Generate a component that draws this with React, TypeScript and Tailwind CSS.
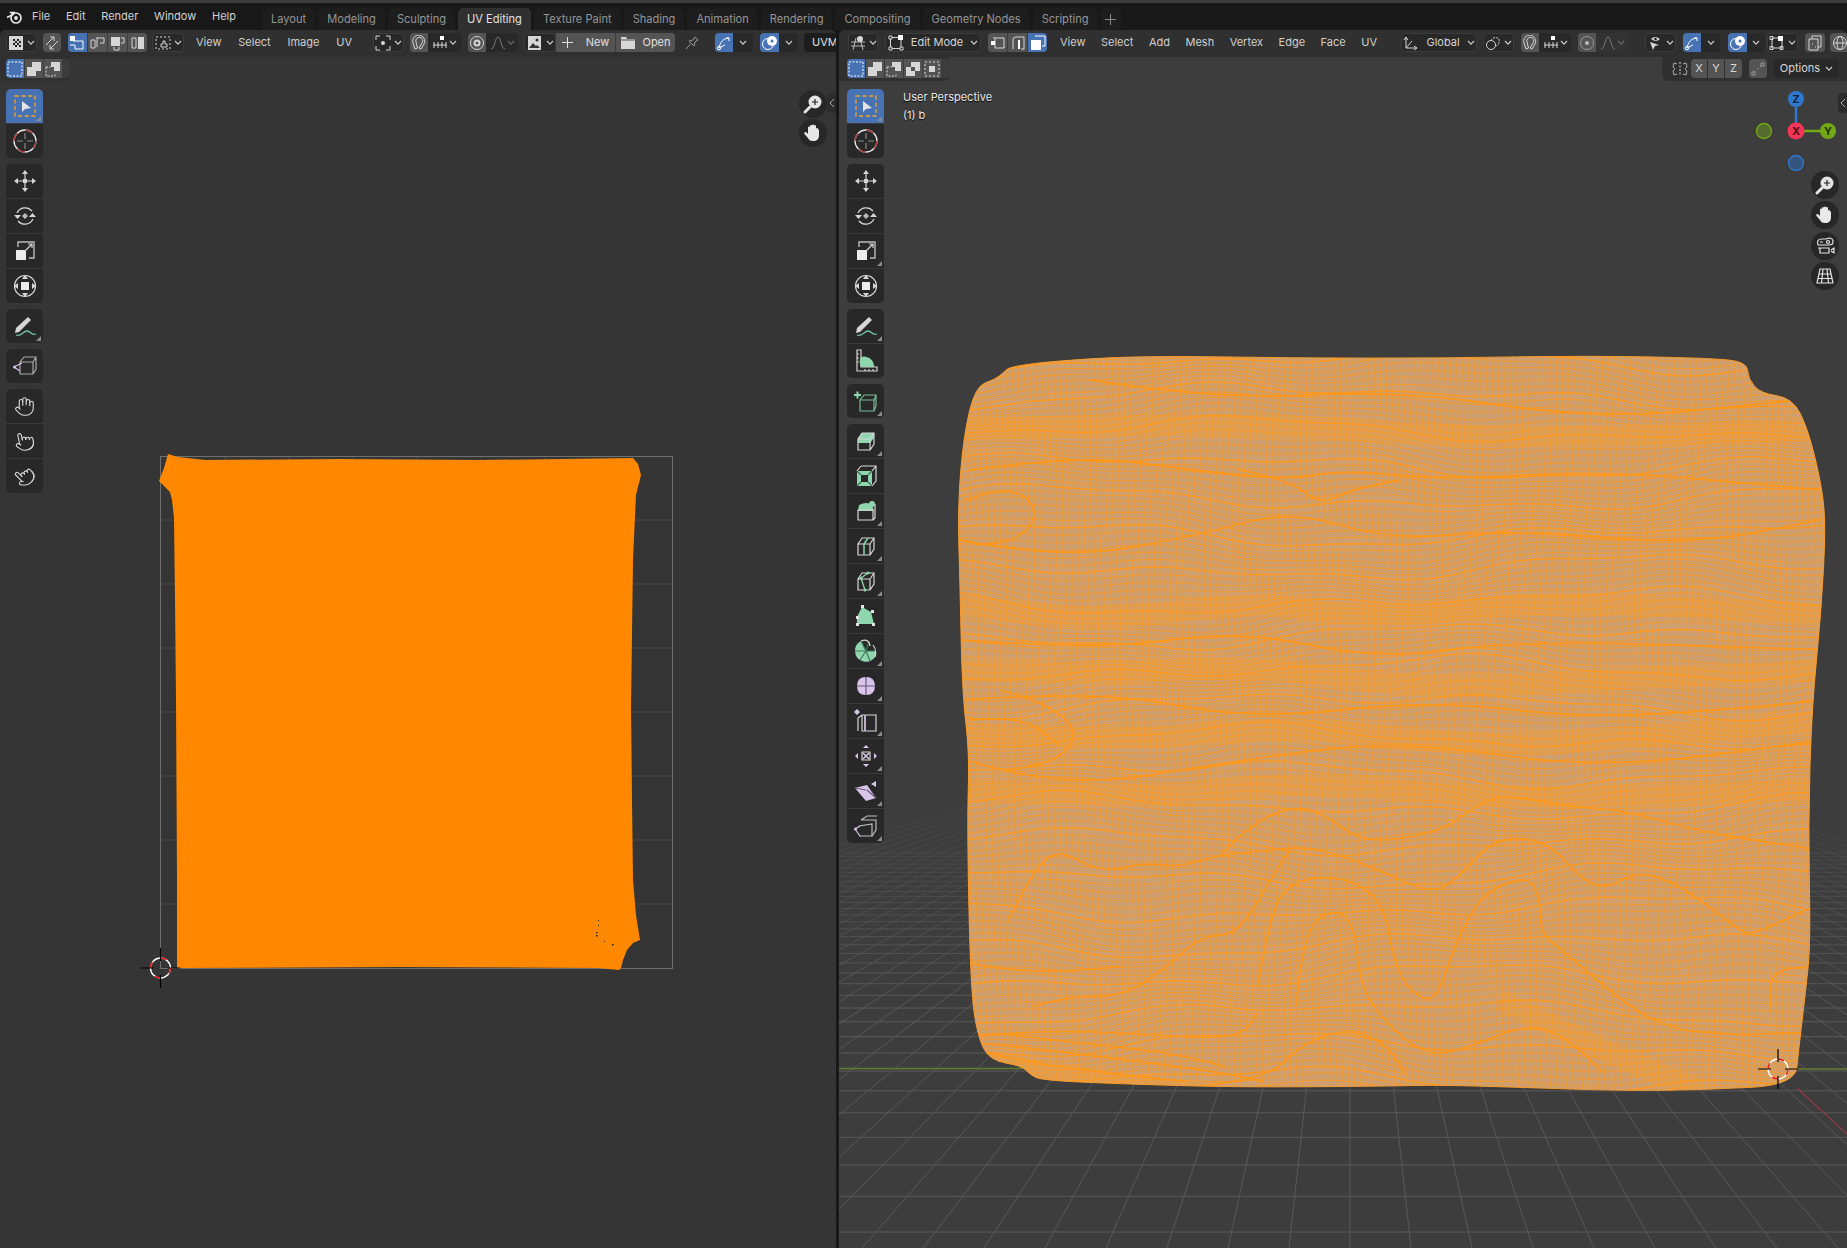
import React from "react";
import { Hand, Pointer } from "lucide-react";

const S = 1.178;
type P = [number, number];
const smooth = (pts: P[], close = true) => {
  const n = pts.length;
  const mid = (a: P, b: P): P => [(a[0] + b[0]) / 2, (a[1] + b[1]) / 2];
  if (close) {
    const m0 = mid(pts[n - 1], pts[0]);
    let d = `M${m0[0].toFixed(1)} ${m0[1].toFixed(1)}`;
    for (let i = 0; i < n; i++) {
      const m = mid(pts[i], pts[(i + 1) % n]);
      d += `Q${pts[i][0].toFixed(1)} ${pts[i][1].toFixed(1)} ${m[0].toFixed(1)} ${m[1].toFixed(1)}`;
    }
    return d + "Z";
  }
  let d = `M${pts[0][0].toFixed(1)} ${pts[0][1].toFixed(1)}`;
  for (let i = 1; i < n - 1; i++) {
    const m = mid(pts[i], pts[i + 1]);
    d += `Q${pts[i][0].toFixed(1)} ${pts[i][1].toFixed(1)} ${m[0].toFixed(1)} ${m[1].toFixed(1)}`;
  }
  const l = pts[n - 1];
  return d + `L${l[0].toFixed(1)} ${l[1].toFixed(1)}`;
};

const meshOutline: P[] = ([
  [828, 328], [845, 322], [852, 316], [858, 311], [900, 306], [975, 302], [1100, 304], [1225, 304], [1350, 302], [1450, 304], [1483, 307], [1484, 322], [1495, 334], [1522, 338],
  [1535, 365], [1546, 410], [1550, 445], [1546, 520], [1538, 600], [1535, 700], [1537, 800], [1533, 840], [1527, 890], [1524, 921], [1450, 925], [1380, 926], [1290, 923], [1220, 921], [1180, 922], [1050, 923], [950, 920], [884, 917], [874, 912], [868, 905], [840, 900], [830, 880], [824, 840],
  [821, 700], [823, 640], [817, 590], [815, 500], [813, 430], [818, 370],
] as P[]).map(([x, y]) => [x * S, y * S] as P);
const meshD = smooth(meshOutline);

const wave = (x: number, i: number) =>
  9 * Math.sin(x / 130 + i * 0.11) + 5 * Math.sin(x / 61 - i * 0.23) + 3 * Math.sin(x / 29 + i * 0.07);

let hThin = "";
let hThick = "";
for (let i = 0; i < 150; i++) {
  const y0 = 345 + i * 5.7;
  let d = "";
  for (let x = 940; x <= 1840; x += 18) d += `${x === 940 ? "M" : "L"}${x} ${(y0 + wave(x, i)).toFixed(1)}`;
  if (i % 6 === 3) hThick += d;
  else hThin += d;
}
let vThin = "";
for (let x = 950; x < 1840; x += 5.7) {
  let d = "";
  for (let y = 340; y <= 1110; y += 30) {
    const dx = 3 * Math.sin(y / 90 + x / 70) + (x - 1350) * (y - 340) * -0.00003;
    d += `${y === 340 ? "M" : "L"}${(x + dx).toFixed(1)} ${y}`;
  }
  vThin += d;
}
const zoomed = (a: P[]) => smooth(a.map(([x, y]) => [840 + x / 1.557, 780 + y / 3] as P), false);
const folds = [
  [[590, 230], [640, 130], [710, 75], [760, 110], [800, 170], [850, 185], [940, 150], [980, 90], [1030, 40], [1130, 80], [1220, 90], [1330, 150], [1420, 180], [1510, 205]],
  [[380, 250], [410, 275], [470, 250], [530, 260], [590, 225], [650, 215], [720, 200], [780, 225], [850, 280], [920, 340], [960, 300], [1010, 190], [1060, 170], [1110, 200], [1150, 290], [1190, 330], [1240, 275], [1290, 300], [1340, 360], [1400, 450], [1420, 465], [1510, 385]],
  [[650, 620], [670, 400], [700, 310], [760, 285], [820, 320], [850, 400], [860, 520], [880, 620], [920, 670], [940, 600], [960, 480], [1000, 340], [1070, 285], [1090, 350], [1090, 460], [1130, 520], [1190, 620], [1260, 720], [1340, 765], [1500, 760]],
  [[710, 680], [720, 470], [760, 385], [800, 420], [810, 620], [850, 730], [910, 825], [970, 810], [1070, 730], [1130, 770], [1190, 880]],
  [[300, 680], [350, 650], [440, 650], [510, 560], [560, 470], [610, 465], [640, 400], [670, 300], [700, 210]],
  [[210, 770], [310, 750], [450, 760], [620, 780], [650, 700]],
  [[540, 920], [660, 905], [720, 790], [790, 745], [850, 790], [880, 880]],
  [[260, 430], [300, 270], [340, 210], [380, 250]],
  [[1450, 690], [1445, 620], [1460, 570], [1505, 560]],
  [[220, 790], [320, 810], [450, 840], [600, 880], [660, 905]],
  [[220, 815], [300, 850], [420, 880], [540, 905]],
  [[240, 760], [380, 790], [520, 820], [600, 860]],
  [[200, 550], [260, 570], [340, 575], [440, 560]],
] as P[][];
const topFolds = ([
  [[970, 470], [1080, 455], [1190, 470], [1290, 480], [1340, 470], [1450, 480], [1600, 470], [1820, 490]],
  [[960, 540], [1060, 560], [1200, 535], [1290, 510], [1390, 540], [1510, 530], [1690, 545], [1820, 520]],
  [[960, 640], [1100, 650], [1240, 630], [1380, 660], [1520, 640], [1830, 650]],
  [[960, 700], [1100, 690], [1250, 720], [1430, 700], [1600, 720], [1830, 700]],
  [[966, 760], [1060, 790], [1240, 760], [1400, 740], [1600, 770], [1825, 740]],
  [[1090, 380], [1220, 400], [1400, 390], [1600, 420], [1800, 400]],
  [[1240, 470], [1290, 480], [1320, 505], [1350, 490], [1400, 480]],
  [[965, 500], [1010, 485], [1040, 510], [1020, 540], [975, 545]],
  [[1000, 690], [1040, 700], [1080, 730], [1060, 760], [1010, 770]],
  [[970, 720], [1020, 715], [1060, 745]],
] as P[][]).map((a) => smooth(a, false));
const bands = ([
  [[960, 605], [1100, 625], [1240, 600], [1380, 620], [1540, 600], [1830, 615]],
  [[960, 670], [1100, 675], [1250, 665], [1430, 690], [1600, 680], [1830, 670]],
  [[960, 735], [1150, 740], [1300, 725], [1500, 750], [1830, 720]],
  [[960, 790], [1150, 800], [1300, 780], [1500, 800], [1830, 790]],
  [[960, 430], [1200, 420], [1500, 440], [1830, 430]],
  [[1500, 1000], [1600, 1050], [1700, 1090]],
  [[970, 1060], [1100, 1080], [1200, 1095]],
] as P[][]).map((a) => smooth(a, false));

const hLines: number[] = [];
for (let n = -1; n < 34; n++) hLines.push(690 + 1 / (0.001845 + 0.00013 * n));
const vLines: number[] = [];
for (let k = -30; k <= 30; k++) vLines.push(k);

const uvShape =
  "168,454 178,457 205,460 340,459 480,460 633,458 638,464 641,475 636,495 633,560 631,707 632,800 633,880 636,915 640,940 633,943 627,950 623,960 621,968 619,970 598,968 400,967 177,968 177,880 176,700 175,600 174,518 172,500 170,492 165,487 159,481 164,468";

const Cursor = ({ x, y }: { x: number; y: number }) => (
  <g>
    <circle cx={x} cy={y} r="10" fill="none" stroke="#fff" strokeWidth="1.4" />
    <circle cx={x} cy={y} r="10" fill="none" stroke="#e81010" strokeWidth="1.4" strokeDasharray="6 9.7" />
    <path d={`M${x - 20} ${y}h13M${x + 7} ${y}h13M${x} ${y - 20}v13M${x} ${y + 7}v13`} stroke="#000" strokeWidth="1.2" />
  </g>
);

const W = "#d6d6d6";
const G = "#8fd6ae";
const V = "#d9c4ea";

const Chev = ({ c = "#c8c8c8" }: { c?: string }) => (
  <svg width="8" height="6" viewBox="0 0 8 6" className="shrink-0">
    <path d="M1 1l3 3.2L7 1" fill="none" stroke={c} strokeWidth="1.2" />
  </svg>
);

const I16 = ({ children, w = 16 }: { children: React.ReactNode; w?: number }) => (
  <svg width={w} height="16" viewBox={`0 0 ${w} 16`} fill="none" stroke={W} strokeWidth="1" className="shrink-0">
    {children}
  </svg>
);

const HI: Record<string, React.ReactNode> = {
  uv: (
    <I16>
      <path d="M1 1h14v14H1z" fill={W} stroke="none" />
      <path d="M5 4h2v2H5zM9 4h2v2H9zM7 6h2v2H7zM11 6h2v2h-2zM9 8h2v2H9zM7 10h2v2H7zM11 10h2v2h-2zM5 8h2v2H5z" fill="#222" stroke="none" />
    </I16>
  ),
  sync: (
    <I16>
      <path d="M2 10l8-8M10 2H6M10 2v4M14 6l-8 8M6 14h4M6 14v-4" />
    </I16>
  ),
  v1: (
    <I16>
      <path d="M3 6h10v8H5v-4H0" stroke="#fff" />
      <path d="M0 1h5v5H0z" fill="#fff" stroke="none" />
    </I16>
  ),
  v2: (
    <I16>
      <path d="M1 5h4v8H1zM7 2v10M7 3h3M10 3h4v5h-4" />
    </I16>
  ),
  v3: (
    <I16>
      <path d="M1 2h9v9H1z" fill={W} stroke="none" />
      <path d="M11 3h3v5h-3M4 12v3h5v-3" />
    </I16>
  ),
  v4: (
    <I16>
      <path d="M2 3h4v10H2z" />
      <path d="M8 2h6v12H8z" fill={W} stroke="none" />
    </I16>
  ),
  sticky: (
    <I16>
      <path d="M1 2h14v12H1z" strokeDasharray="2 2" />
      <path d="M6 9h2V6h2v3h2v3H6z" />
    </I16>
  ),
  pivot: (
    <I16>
      <path d="M1 5V1h4M11 1h4v4M15 11v4h-4M5 15H1v-4" />
      <circle cx="8" cy="8" r="2" fill={W} stroke="none" />
    </I16>
  ),
  mag: (
    <I16>
      <path d="M4 14L2 8a6 6 0 1 1 11 1l-3 5-2-1 3-5a3.500 3.500 0 1 0-6-1l1.500 6z" />
    </I16>
  ),
  inc: (
    <I16>
      <path d="M1 10h14M2 7v6M6 7v6M10 7v6M14 7v6" />
      <path d="M8 1h4v4H8z" fill="#fff" stroke="none" />
    </I16>
  ),
  prop: (
    <I16>
      <circle cx="8" cy="8" r="6.5" />
      <circle cx="8" cy="8" r="3.5" fill={W} stroke="none" />
      <circle cx="8" cy="8" r="1.5" fill="#555" stroke="none" />
    </I16>
  ),
  propd: (
    <svg width="16" height="16" viewBox="0 0 16 16" fill="none" stroke="#9a9a9a">
      <circle cx="8" cy="8" r="6.5" />
      <circle cx="8" cy="8" r="2" fill="#bbb" stroke="none" />
    </svg>
  ),
  curve: (
    <svg width="16" height="16" viewBox="0 0 16 16" fill="none" stroke="#777">
      <path d="M1 14c4 0 4-12 7-12s3 12 7 12" />
    </svg>
  ),
  image: (
    <I16>
      <path d="M1 1h13v14H1z" fill={W} stroke="none" />
      <path d="M2 13l4-5 3 3 1-1 3 3z" fill="#333" stroke="none" />
      <circle cx="10" cy="5" r="1.5" fill="#333" stroke="none" />
    </I16>
  ),
  folder: (
    <I16>
      <path d="M1 2h5l1 2h8v10H1z" fill={W} stroke="none" />
      <path d="M1 5h14" stroke="#555" />
    </I16>
  ),
  pin: (
    <I16>
      <path d="M2 14l4.5-5M5 6l5 5 1-4 3-2-3-3-2 3z" stroke="#9a9a9a" />
    </I16>
  ),
  gizmo: (
    <I16>
      <path d="M3 13C4 7 8 3 13 3M13 3h-3M13 3v3M3 13l6-3" stroke="#fff" />
      <circle cx="3" cy="13" r="1.7" stroke="#fff" />
    </I16>
  ),
  overlay: (
    <I16>
      <circle cx="6" cy="9" r="5.5" stroke="#fff" />
      <circle cx="10" cy="6" r="5" fill="#fff" stroke="none" />
      <circle cx="10" cy="6" r="1.5" fill="#4772b3" stroke="none" />
    </I16>
  ),
  vp: (
    <I16>
      <path d="M1 7h14M1 11h14M6 3L3 15M10 3l3 12" stroke="#bbb" />
      <circle cx="10" cy="4" r="3" fill={W} stroke="none" />
    </I16>
  ),
  edit: (
    <I16>
      <path d="M3 2.5h9M2.5 3v10M13 3v10M3 13.5h9" />
      <path d="M10 0h5v5h-5z" fill="#fff" stroke="none" />
      <path d="M1 1h3v3H1zM1 12h3v3H1zM12 12h3v3h-3z" fill="#282828" />
    </I16>
  ),
  m1: (
    <I16>
      <path d="M5 3h9v10H5zM3 3q2-1 2 0" />
      <path d="M1 6h4v4H1z" fill="#fff" stroke="none" />
    </I16>
  ),
  m2: (
    <I16>
      <path d="M3 14V5q0-3 3-3h8v12h-3" />
      <path d="M9 5v9" stroke="#fff" strokeWidth="2" />
    </I16>
  ),
  m3: (
    <I16>
      <path d="M1 5h10v10H1z" fill="#fff" stroke="none" />
      <path d="M5 1h10v10h-3" stroke="#fff" />
    </I16>
  ),
  global: (
    <I16>
      <path d="M3 2v11h11M3 13l6-7M3 2l-2 3M3 2l2 3M14 13l-3-2M14 13l-3 2" />
    </I16>
  ),
  pivot2: (
    <I16>
      <circle cx="6" cy="10" r="4.5" />
      <path d="M6 5.5A5 5 0 0 1 14 4c1 3-1 7-3.5 7" strokeDasharray="2 1" />
    </I16>
  ),
  visi: (
    <I16>
      <path d="M3 7l9 3-4 1-2 4z" fill={W} stroke="none" />
      <path d="M4 4q4-4 9 0q-4 4-9 0z" fill={W} stroke="none" />
      <circle cx="8.5" cy="4" r="1.3" fill="#222" stroke="none" />
    </I16>
  ),
  editsq: (
    <I16>
      <path d="M3 3h8M3 13h10M3 3v10M13 6v7" />
      <path d="M9 1h5v5H9z" fill="#fff" stroke="none" />
      <path d="M1 1.5h3v3H1zM1 11.5h3v3H1zM11 11.5h3v3h-3z" />
    </I16>
  ),
  xray: (
    <I16>
      <path d="M5 1h9v11H5z" />
      <path d="M2 4h9v11H2z" fill="#545454" />
      <path d="M5 9h1M8 12h1" />
    </I16>
  ),
  shade: (
    <I16>
      <circle cx="8" cy="8" r="6.5" />
      <ellipse cx="8" cy="8" rx="3" ry="6.5" />
      <path d="M1.5 8h13" />
    </I16>
  ),
  mirror: (
    <I16>
      <path d="M8 1v14" strokeDasharray="2 1.5" />
      <path d="M5 3L2 2 1 6l2 2-2 2 1 4 3-1M11 3l3-1 1 4-2 2 2 2-1 4-3-1" stroke="#aaa" />
    </I16>
  ),
  automerge: (
    <I16>
      <path d="M4 11L11 5" strokeDasharray="2 2" stroke="#999" />
      <path d="M2 11h3v3H2zM11 2h3v3h-3z" stroke="#999" />
    </I16>
  ),
  sel1: (
    <I16>
      <path d="M1 1h14v14H1z" stroke="#fff" strokeDasharray="2 1.5" />
    </I16>
  ),
  sel2: (
    <I16>
      <path d="M1 6h5V1h9v9h-5v5H1z" fill={W} stroke="none" />
    </I16>
  ),
  sel3: (
    <I16>
      <path d="M6 1h9v9H9V6H6z" fill={W} stroke="none" />
      <path d="M1 6h5M1 6v9h9v-3M6 6" strokeDasharray="2 1.5" />
    </I16>
  ),
  sel4: (
    <I16>
      <path d="M1 6h5V1h9v9h-5v5H1z" fill={W} stroke="none" />
      <path d="M6 6h4v4H6z" fill="#545454" stroke="none" />
    </I16>
  ),
  sel5: (
    <I16>
      <path d="M1 1h14v14H1z" strokeDasharray="2 2" />
      <path d="M5 5h6v6H5z" fill={W} stroke="none" />
    </I16>
  ),
};

const Drop = ({ icon, w, label }: { icon?: string; w: string; label?: string }) => (
  <div className={`${w} h-[19px] shrink-0 flex items-center justify-center gap-[3px] rounded-[4px] bg-[#282828] border border-[#3c3c3c]`}>
    {icon ? HI[icon] : null}
    {label ? <span className="text-[11px] mx-[4px] text-[#d4d4d4]">{label}</span> : null}
    <Chev />
  </div>
);

const Seg = ({ items, bw, active = -1 }: { items: React.ReactNode[]; bw: string; active?: number }) => (
  <div className="flex h-[19px] shrink-0 rounded-[4px] overflow-hidden gap-px bg-[#3c3c3c]">
    {items.map((it, i) => (
      <div key={i} className={`${bw} shrink-0 flex items-center justify-center ${i === active ? "bg-[#4772b3]" : "bg-[#545454]"}`}>
        {it}
      </div>
    ))}
  </div>
);

const Menu = ({ items, cls }: { items: string[]; cls: string }) => (
  <div className={`flex justify-between shrink-0 text-[11px] text-[#cfcfcf] ${cls}`}>
    {items.map((m) => (
      <span key={m}>{m}</span>
    ))}
  </div>
);

const Corner = () => (
  <svg width="5" height="5" viewBox="0 0 5 5" className="absolute right-[2px] bottom-[2px]">
    <path d="M5 0v5H0z" fill="#8c8c8c" />
  </svg>
);

const Cube = ({ c = W }: { c?: string }) => (
  <path d="M4 10h12v11H4zM4 10l4-6h12v11l-4 6M16 10l4-6" fill="none" stroke={c} strokeWidth="1.2" />
);

type TI = { d: React.ReactNode; c?: boolean; a?: boolean };
const T24 = ({ children }: { children: React.ReactNode }) => (
  <svg width="24" height="24" viewBox="0 0 24 24" fill="none" stroke={W} strokeWidth="1.2">
    {children}
  </svg>
);
const ic = {
  select: (
    <T24>
      <path d="M2 2h20v20H2z" stroke="#f5a623" strokeWidth="1.3" strokeDasharray="4 2.6" />
      <path d="M9 7v11l3-3 6-1z" fill="#e4e4e4" stroke="none" />
    </T24>
  ),
  cursor: (
    <T24>
      <circle cx="12" cy="12" r="11" stroke="#e8e8e8" strokeWidth="1.3" />
      <circle cx="12" cy="12" r="11" stroke="#a33535" strokeWidth="1.4" strokeDasharray="8 9.3" />
      <path d="M12 4v6M12 14v6M4 12h6M14 12h6" stroke="#8a8a8a" />
    </T24>
  ),
  move: (
    <T24>
      <path d="M12 1l3 4H9zM12 23l3-4H9zM1 12l4-3v6zM23 12l-4-3v6z" fill={W} stroke="none" />
      <path d="M12 5v5M12 14v5M5 12h5M14 12h5" />
      <path d="M10 10h4v4h-4z" fill={W} stroke="none" />
    </T24>
  ),
  rotate: (
    <T24>
      <path d="M4 9a9 9 0 0 1 15-2M20 15a9 9 0 0 1-15 2" />
      <path d="M1 11h7l-3.500 4zM16 13h7l-3.500-4z" fill={W} stroke="none" />
      <path d="M12 9l3 3-3 3-3-3z" fill="#bbb" stroke="none" />
    </T24>
  ),
  scale: (
    <T24>
      <path d="M5 8V3h16v16h-5" stroke="#bbb" strokeWidth="1.4" />
      <path d="M3 11h10v10H3z" fill="#ececec" stroke="none" />
      <path d="M12 12l7-7M15 5h4v4" />
    </T24>
  ),
  transform: (
    <T24>
      <circle cx="12" cy="12" r="10.500" />
      <path d="M8 8h8v8H8z" fill="#ececec" stroke="none" />
      <path d="M12 1l3 4H9zM12 23l3-4H9zM1 12l4-3v6zM23 12l-4-3v6z" fill={W} stroke="none" />
    </T24>
  ),
  annotate: (
    <T24>
      <path d="M3 14L15 3l3 3L6 18l-4 1z" fill={W} stroke="none" />
      <path d="M3 21c5 2 7-4 11-4s4 5 9 3" stroke="#74c6a2" strokeWidth="1.3" />
    </T24>
  ),
  cage: (
    <T24>
      <path d="M7 8h13v12H7zM7 8l4-5h12v12l-3 5M20 8l3-5" stroke="#a8a8a8" />
      <path d="M1 13L9 9M1 13l6 4" stroke={V} />
      <circle cx="1.500" cy="13" r="1.500" fill={V} stroke="none" />
    </T24>
  ),
  grab: <Hand size={21} strokeWidth={1.3} color={W} />,
  pinch: <Pointer size={21} strokeWidth={1.3} color={W} className="-rotate-12" />,
  pinch2: <Pointer size={21} strokeWidth={1.3} color={W} className="-rotate-45" />,
  measure: (
    <T24>
      <path d="M3 1h4v17h16v4H3z" stroke={W} />
      <path d="M7 18a11 11 0 0 1 0-10 10 10 0 0 1 13 10z" fill={G} stroke="none" />
      <path d="M3 5h2M3 9h2M3 13h2M11 22v-2M15 22v-2M19 22v-2" />
    </T24>
  ),
  add: (
    <T24>
      <path d="M0 6h7M3.500 2.500v7" stroke={G} strokeWidth="2" />
      <path d="M6 11h14v11H6zM6 11l4-5h12v11l-2 5M20 11l2-5" stroke="#79b897" />
    </T24>
  ),
  extrude: (
    <T24>
      <path d="M4 10l4-6h12v5l-4 5H4z" fill={G} stroke="none" />
      <Cube />
    </T24>
  ),
  inset: (
    <T24>
      <path d="M3 7h15v15H3z" fill={G} stroke="none" />
      <path d="M7 11h7v7H7z" fill="#282828" stroke="none" />
      <path d="M3 7l4 4M18 7l-4 4M3 22l4-4M18 22l-4-4" stroke="#3a6a50" />
      <path d="M7 2h15v15l-4 5M3 7l4-5M18 7l4-5" />
    </T24>
  ),
  bevel: (
    <T24>
      <path d="M5 6q8-4 13 0l2 6H4z" fill={G} stroke="none" />
      <circle cx="18" cy="5" r="3" fill={G} stroke="none" />
      <path d="M4 11h15v10H4zM19 21l2-2V5" />
    </T24>
  ),
  loop: (
    <T24>
      <Cube />
      <path d="M10 21V10l4-6" stroke={G} strokeWidth="1.5" />
    </T24>
  ),
  knife: (
    <T24>
      <Cube />
      <path d="M7 9l4 12M7 9l7-5" stroke={G} strokeWidth="1.3" />
      <circle cx="7" cy="9" r="1.500" fill={G} stroke="none" />
      <circle cx="14" cy="4" r="1.500" fill={G} stroke="none" />
      <circle cx="11" cy="21" r="1.500" fill={G} stroke="none" />
    </T24>
  ),
  poly: (
    <T24>
      <path d="M3 13L8 3l9 5 3 12H3z" fill={G} stroke="none" />
      <path d="M2 12h3v3H2zM7 1h3v3H7zM17 6h3v3h-3zM18 19h3v3h-3zM2 19h3v3H2z" fill="#e4e4e4" stroke="none" />
    </T24>
  ),
  spin: (
    <T24>
      <path d="M12 12L7 2a11 11 0 0 0-6 10 11 11 0 0 0 20 6 10 10 0 0 0 0-6z" fill={G} stroke="none" />
      <path d="M12 12L7 2M12 12H1M12 12l-6 9M12 12l4 10M12 12l9 0M12 12L15 2" stroke="#3f7a5a" />
      <path d="M7 2q8-3 9 5M19 6q4 5 2 12" />
    </T24>
  ),
  smooth: (
    <T24>
      <path d="M3 12q0-9 9-9t9 9-9 9-9-9z" fill={V} stroke="none" />
      <path d="M3 12h18M12 3v18" stroke="#6b5a7a" />
    </T24>
  ),
  slide: (
    <T24>
      <path d="M0 3l3-3 3 3-3 3z" fill={V} stroke="none" />
      <path d="M8 6h14v16H8zM4 22V9l4-3M11 22V6" />
      <path d="M11 7v15" stroke={V} />
    </T24>
  ),
  shrink: (
    <T24>
      <path d="M8 8h8v8H8z" />
      <path d="M12 1l3 3H9zM12 23l3-3H9zM1 12l3-3v6zM23 12l-3-3v6z" fill={V} stroke="none" />
      <path d="M9 9l6 6M15 9l-6 6" stroke={V} strokeWidth="1.5" />
    </T24>
  ),
  shear: (
    <T24>
      <path d="M1 9l12-3 9 13-10 3z" fill={V} stroke="none" />
      <path d="M13 11L22 19M1 9l11 2" stroke="#6b5a7a" />
      <path d="M17 5l5-3v6z" fill={V} stroke="none" />
    </T24>
  ),
  rip: (
    <T24>
      <path d="M7 6h15v10l-4 6M7 6l6-4h10M22 6" stroke="#bdbdbd" />
      <path d="M5 12l13-2v12H5" stroke="#bdbdbd" />
      <path d="M1 15l5-3M1 15l5 7" stroke={V} />
      <circle cx="1.500" cy="15" r="1.500" fill={V} stroke="none" />
    </T24>
  ),
};

const Tool = ({ d, c, a }: TI) => (
  <div className={`relative h-[34px] flex items-center justify-center ${a ? "bg-[#4772b3]" : "bg-[#282828]"}`}>
    {d}
    {c ? <Corner /> : null}
  </div>
);
const Col = ({ groups, cls }: { groups: TI[][]; cls: string }) => (
  <div className={`relative w-[37px] flex flex-col gap-[6px] mt-[8px] ${cls}`}>
    {groups.map((g, i) => (
      <div key={i} className="flex flex-col gap-px bg-[#3a3a3a] rounded-[5px] overflow-hidden">
        {g.map((t, j) => (
          <Tool key={j} {...t} />
        ))}
      </div>
    ))}
  </div>
);

const Round = ({ children, cls }: { children: React.ReactNode; cls: string }) => (
  <div className={`absolute w-[28px] h-[28px] rounded-full bg-[#272727] flex items-center justify-center ${cls}`}>{children}</div>
);
const ZoomIc = () => (
  <svg width="20" height="20" viewBox="0 0 20 20" fill="none">
    <circle cx="12" cy="8" r="6.500" fill="#e4e4e4" />
    <path d="M12 5v6M9 8h6" stroke="#222" strokeWidth="1.2" />
    <path d="M7 13l-5 5" stroke="#e4e4e4" strokeWidth="3" strokeLinecap="round" />
  </svg>
);
const HandIc = () => (
  <svg width="20" height="20" viewBox="0 0 20 20">
    <path d="M5 8V4.500a1 1 0 0 1 2 0V3a1 1 0 0 1 2 0v-.5a1 1 0 0 1 2 0V3a1 1 0 0 1 2 0v3a1 1 0 0 1 2 0l1 1v5c0 4-2 6-6 6-3 0-4-1-5-3L1.500 11c-1-1.500 1-2.500 2-1.500L5 11z" fill="#e8e8e8" />
  </svg>
);
const Chevron = ({ cls }: { cls: string }) => (
  <div className={`absolute w-[9px] h-[20px] bg-[#2c2c2c] rounded-l-[4px] flex items-center justify-center ${cls}`}>
    <svg width="6" height="10" viewBox="0 0 6 10">
      <path d="M5 1L1 5l4 4" fill="none" stroke="#aaa" />
    </svg>
  </div>
);

const tabs = ["Layout", "Modeling", "Sculpting", "UV Editing", "Texture Paint", "Shading", "Animation", "Rendering", "Compositing", "Geometry Nodes", "Scripting"];

const leftTools: TI[][] = [
  [{ d: ic.select, c: true, a: true }, { d: ic.cursor }],
  [{ d: ic.move }, { d: ic.rotate }, { d: ic.scale }, { d: ic.transform }],
  [{ d: ic.annotate, c: true }],
  [{ d: ic.cage }],
  [{ d: ic.grab }, { d: ic.pinch }, { d: ic.pinch2 }],
];
const rightTools: TI[][] = [
  [{ d: ic.select, c: true, a: true }, { d: ic.cursor }],
  [{ d: ic.move }, { d: ic.rotate }, { d: ic.scale, c: true }, { d: ic.transform }],
  [{ d: ic.annotate, c: true }, { d: ic.measure }],
  [{ d: ic.add, c: true }],
  [
    { d: ic.extrude, c: true },
    { d: ic.inset },
    { d: ic.bevel, c: true },
    { d: ic.loop, c: true },
    { d: ic.knife, c: true },
    { d: ic.poly },
    { d: ic.spin, c: true },
    { d: ic.smooth, c: true },
    { d: ic.slide, c: true },
    { d: ic.shrink, c: true },
    { d: ic.shear, c: true },
    { d: ic.rip, c: true },
  ],
];

export default function App() {
  return (
    <div className="w-[1847px] h-[1248px] overflow-hidden flex flex-col bg-[#181818] [font-family:Inter,sans-serif] antialiased">
      <div className="h-[3px] bg-[#3d3d3d] shrink-0" />
      <div className="h-[27px] shrink-0 flex items-end relative">
        <div className="h-[27px] w-[32px] pr-[4px] flex items-center justify-center">
          <svg width="17" height="14" viewBox="0 0 17 14" fill="none">
            <circle cx="10" cy="8" r="5" stroke="#e8e8e8" strokeWidth="1.7" />
            <circle cx="10" cy="8" r="1.900" fill="#e8e8e8" />
            <path d="M1 7.500L7 4.500 5 2.500h4" stroke="#e8e8e8" strokeWidth="1.600" />
          </svg>
        </div>
        <div className="h-[27px] w-[204px] flex items-center justify-between text-[11px] text-[#d2d2d2]">
          <span>File</span>
          <span>Edit</span>
          <span>Render</span>
          <span>Window</span>
          <span>Help</span>
        </div>
        <div className="ml-[26px] flex items-end gap-[3px]">
          {tabs.map((t) => (
            <div
              key={t}
              className={`h-[22px] px-[9px] flex items-center rounded-t-[5px] text-[11.1px] ${t === "UV Editing" ? "bg-[#303030] text-[#e2e2e2]" : "bg-[#1d1d1d] text-[#969696]"}`}
            >
              {t}
            </div>
          ))}
          <div className="h-[22px] w-[20px] rounded-[4px] bg-[#1d1d1d] flex items-center justify-center">
            <svg width="11" height="11" viewBox="0 0 11 11">
              <path d="M5.500 0v11M0 5.500h11" stroke="#8a8a8a" />
            </svg>
          </div>
        </div>
      </div>

      <div className="flex-1 flex gap-[3px] min-h-0">
        {/* UV editor */}
        <div className="relative w-[836px] shrink-0 bg-[#353535] rounded-t-[6px] overflow-hidden">
          <svg className="absolute inset-0" width="836" height="1218" viewBox="0 30 836 1218">
            <path
              d="M160.500 520H672.500M160.500 584H672.500M160.500 648H672.500M160.500 712H672.500M160.500 776H672.500M160.500 840H672.500M160.500 904H672.500M224.500 456V968M288.500 456V968M352.500 456V968M416.500 456V968M480.500 456V968M544.500 456V968M608.500 456V968"
              stroke="#494949"
            />
            <rect x="160.500" y="456.500" width="512" height="512" fill="none" stroke="#6f6f6f" />
            <polygon points={uvShape} fill="#ff8800" />
            <path d="M596 932h1.500v1.500H596zM596 935h1.500v1.500H596zM612 944h1.500v1.500H612zM598 920h1v1h-1zM604 941h1v1h-1zM598 925h1v1h-1z" fill="#2a2a2a" />
            <Cursor x={160.5} y={968} />
          </svg>
          <div className="relative h-[27px] bg-[#303030] flex items-center pb-[2px] pl-[6px] [&>*]:shrink-0">
            <Drop icon="uv" w="w-[31px]" />
            <div className="ml-[6px]">
              <Seg items={[HI.sync]} bw="w-[18px]" />
            </div>
            <div className="ml-[7px]">
              <Seg items={[HI.v1, HI.v2, HI.v3, HI.v4]} bw="w-[19px]" active={0} />
            </div>
            <div className="ml-[5px]">
              <Drop icon="sticky" w="w-[32px]" />
            </div>
            <Menu items={["View", "Select", "Image", "UV"]} cls="ml-[12px] w-[156px]" />
            <div className="ml-[21px]">
              <Drop icon="pivot" w="w-[31px]" />
            </div>
            <div className="ml-[6px] flex h-[19px] rounded-[4px] overflow-hidden">
              <div className="w-[18px] bg-[#545454] flex items-center justify-center">{HI.mag}</div>
              <div className="w-[33px] bg-[#282828] flex items-center justify-center gap-[1px]">
                {HI.inc}
                <Chev />
              </div>
            </div>
            <div className="ml-[7px] flex h-[19px] rounded-[4px] overflow-hidden">
              <div className="w-[18px] bg-[#545454] flex items-center justify-center">{HI.prop}</div>
              <div className="w-[32px] bg-[#282828] flex items-center justify-center gap-[1px]">
                {HI.curve}
                <Chev c="#666" />
              </div>
            </div>
            <div className="ml-[6px]">
              <Drop icon="image" w="w-[32px]" />
            </div>
            <div className="flex h-[19px] rounded-r-[4px] overflow-hidden gap-px bg-[#3c3c3c] text-[11px] text-[#e0e0e0]">
              <div className="w-[59px] bg-[#545454] flex items-center justify-center gap-[13px]">
                <svg width="11" height="11" viewBox="0 0 11 11">
                  <path d="M5.500 0v11M0 5.500h11" stroke="#e0e0e0" />
                </svg>
                <span>New</span>
              </div>
              <div className="w-[59px] bg-[#545454] flex items-center justify-center gap-[6px]">
                {HI.folder}
                <span>Open</span>
              </div>
            </div>
            <div className="ml-[9px]">{HI.pin}</div>
            <div className="ml-[15px] flex h-[19px] rounded-[4px] overflow-hidden">
              <div className="w-[18px] bg-[#4772b3] flex items-center justify-center">{HI.gizmo}</div>
              <div className="w-[20px] bg-[#282828] flex items-center justify-center">
                <Chev />
              </div>
            </div>
            <div className="ml-[7px] flex h-[19px] rounded-[4px] overflow-hidden">
              <div className="w-[19px] bg-[#4772b3] flex items-center justify-center">{HI.overlay}</div>
              <div className="w-[19px] bg-[#282828] flex items-center justify-center">
                <Chev />
              </div>
            </div>
            <div className="ml-[6px] w-[60px] h-[19px] rounded-l-[4px] bg-[#1d1d1d] pl-[8px] flex items-center text-[11px] text-[#e0e0e0]">UVMap</div>
          </div>
          <div className="relative h-[24px] w-[70px] bg-[#303030] rounded-br-[6px] pt-[2px] pl-[6px]">
            <Seg items={[HI.sel1, HI.sel2, HI.sel3]} bw="w-[18px]" active={0} />
          </div>
          <Col groups={leftTools} cls="ml-[6px]" />
          <Round cls="left-[799px] top-[60px]">
            <ZoomIc />
          </Round>
          <Round cls="left-[799px] top-[89px]">
            <HandIc />
          </Round>
          <Chevron cls="right-0 top-[63px]" />
        </div>

        {/* 3D viewport */}
        <div className="relative flex-1 bg-[#3d3d3d] rounded-t-[6px] overflow-hidden">
          <svg className="absolute inset-0" width="1008" height="1218" viewBox="839 30 1008 1218">
            <defs>
              <linearGradient id="fade" gradientUnits="userSpaceOnUse" x1="0" y1="770" x2="0" y2="1010">
                <stop offset="0" stopColor="#585858" stopOpacity="0" />
                <stop offset="1" stopColor="#585858" stopOpacity="1" />
              </linearGradient>
              <clipPath id="meshclip">
                <path d={meshD} />
              </clipPath>
              <pattern id="hatch" width="3" height="3" patternUnits="userSpaceOnUse" patternTransform="rotate(45)">
                <rect width="3" height="3" fill="#d4a26f" />
                <path d="M0 0v3" stroke="#b09478" strokeWidth="1" />
              </pattern>
            </defs>
            <g stroke="url(#fade)" fill="none">
              {hLines.filter((y) => y > 770 && y < 1250).map((y, i) => (
                <path key={i} d={`M839 ${y.toFixed(1)}H1847.100`} />
              ))}
              {vLines.map((k) => (
                <path key={k} d={`M${(1350 + (k * 61 * (770 - 690)) / 558).toFixed(1)} 770L${1350 + k * 61} 1248`} />
              ))}
            </g>
            <path d="M839 1068.500H1780M1780 1069H1847" stroke="#5f7d2c" strokeWidth="1.300" />
            <path d="M1797 1088L1850 1137" stroke="#8c3a48" strokeWidth="1.300" />
            <g clipPath="url(#meshclip)">
              <rect x="940" y="330" width="920" height="790" fill="url(#hatch)" />
              <path d={vThin} stroke="#f59a28" strokeOpacity="0.6" strokeWidth="1" fill="none" />
              <path d={hThin} stroke="#fb9820" strokeOpacity="0.8" strokeWidth="1.100" fill="none" />
              <path d={hThick} stroke="#ff991f" strokeWidth="1.500" fill="none" />
              {bands.map((d, i) => (
                <path key={i} d={d} stroke="#ff9a1f" strokeOpacity="0.3" strokeWidth="22" fill="none" />
              ))}
              {folds.map((f, i) => (
                <path key={i} d={zoomed(f)} stroke="#ff981a" strokeWidth="1.800" fill="none" />
              ))}
              {topFolds.map((d, i) => (
                <path key={i} d={d} stroke="#ff981a" strokeWidth="1.800" fill="none" />
              ))}
            </g>
            <path d={meshD} fill="none" stroke="#f89a2a" strokeWidth="1" />
            <Cursor x={1778} y={1069} />
          </svg>
          <div className="relative h-[27px] bg-[#303030] flex items-center pb-[2px] pl-[9px] [&>*]:shrink-0">
            <Drop icon="vp" w="w-[30px]" />
            <div className="ml-[7px]">
              <Drop icon="edit" label="Edit Mode" w="w-[96px]" />
            </div>
            <div className="ml-[7px]">
              <Seg items={[HI.m1, HI.m2, HI.m3]} bw="w-[19px]" active={2} />
            </div>
            <Menu items={["View", "Select", "Add", "Mesh", "Vertex", "Edge", "Face", "UV"]} cls="ml-[13px] w-[317px]" />
            <div className="ml-[24px]">
              <Drop icon="global" label="Global" w="w-[76px]" />
            </div>
            <div className="ml-[6px]">
              <Drop icon="pivot2" w="w-[31px]" />
            </div>
            <div className="ml-[7px] flex h-[19px] rounded-[4px] overflow-hidden">
              <div className="w-[18px] bg-[#545454] flex items-center justify-center">{HI.mag}</div>
              <div className="w-[32px] bg-[#282828] flex items-center justify-center gap-[1px]">
                {HI.inc}
                <Chev />
              </div>
            </div>
            <div className="ml-[7px] flex h-[19px] rounded-[4px] overflow-hidden">
              <div className="w-[18px] bg-[#545454] flex items-center justify-center">{HI.propd}</div>
              <div className="w-[32px] bg-[#333] flex items-center justify-center gap-[1px]">
                {HI.curve}
                <Chev c="#666" />
              </div>
            </div>
            <div className="ml-[17px]">
              <Drop icon="visi" w="w-[31px]" />
            </div>
            <div className="ml-[7px] flex h-[19px] rounded-[4px] overflow-hidden">
              <div className="w-[18px] bg-[#4772b3] flex items-center justify-center">{HI.gizmo}</div>
              <div className="w-[19px] bg-[#282828] flex items-center justify-center">
                <Chev />
              </div>
            </div>
            <div className="ml-[8px] flex h-[19px] rounded-[4px] overflow-hidden">
              <div className="w-[19px] bg-[#4772b3] flex items-center justify-center">{HI.overlay}</div>
              <div className="w-[18px] bg-[#282828] flex items-center justify-center">
                <Chev />
              </div>
            </div>
            <div className="ml-[2px]">
              <Drop icon="editsq" w="w-[31px]" />
            </div>
            <div className="ml-[7px]">
              <Seg items={[HI.xray]} bw="w-[20px]" />
            </div>
            <div className="ml-[5px]">
              <Seg items={[HI.shade]} bw="w-[20px]" />
            </div>
          </div>
          <div className="relative h-[24px] flex justify-between">
            <div className="w-[111px] bg-[#303030] rounded-br-[6px] pt-[2px] pl-[8px]">
              <Seg items={[HI.sel1, HI.sel2, HI.sel3, HI.sel4, HI.sel5]} bw="w-[18px]" active={0} />
            </div>
            <div className="w-[185px] bg-[#303030] rounded-bl-[6px] pt-[2px] pl-[10px] flex items-start">
              <div className="h-[19px] flex items-center">{HI.mirror}</div>
              <div className="ml-[3px] flex h-[19px] rounded-[4px] overflow-hidden gap-px text-[11px] text-[#d8d8d8]">
                <div className="w-[16px] bg-[#545454] flex items-center justify-center">X</div>
                <div className="w-[16px] bg-[#545454] flex items-center justify-center">Y</div>
                <div className="w-[17px] bg-[#545454] flex items-center justify-center">Z</div>
              </div>
              <div className="ml-[7px] w-[18px] h-[19px] rounded-[4px] bg-[#545454] flex items-center justify-center">{HI.automerge}</div>
              <div className="ml-[7px] w-[65px] h-[19px] rounded-[4px] bg-[#282828] flex items-center justify-center gap-[5px] text-[11px] text-[#d8d8d8]">
                Options
                <Chev />
              </div>
            </div>
          </div>
          <Col groups={rightTools} cls="ml-[8px]" />
          <div className="absolute left-[64px] top-[58px] text-[11px] leading-[18px] text-[#ececec] [text-shadow:0_1px_1px_#000]">
            <div>User Perspective</div>
            <div>(1) b</div>
          </div>
          <svg className="absolute left-[909px] top-[50px]" width="99" height="110" viewBox="909 50 99 110">
            <path d="M957 69v32" stroke="#2e78d0" strokeWidth="2.400" />
            <path d="M957 101h32" stroke="#71a814" strokeWidth="2.400" />
            <circle cx="925" cy="101" r="7.500" fill="#556b2f" stroke="#71a814" strokeWidth="1.300" />
            <circle cx="957" cy="133" r="7.500" fill="#35557f" stroke="#2e78d0" strokeWidth="1.300" />
            <circle cx="957" cy="69" r="8" fill="#2e78d0" />
            <circle cx="957" cy="101" r="8.500" fill="#f53558" />
            <circle cx="989" cy="101" r="8" fill="#71a814" />
            <g fontSize="11" fontWeight="700" textAnchor="middle" fontFamily="Inter, sans-serif">
              <text x="957" y="73" fill="#10233d">Z</text>
              <text x="957" y="105" fill="#4a0a18">X</text>
              <text x="989" y="105" fill="#22330a">Y</text>
            </g>
          </svg>
          <Chevron cls="right-0 top-[63px]" />
          <Round cls="left-[972px] top-[141px]">
            <ZoomIc />
          </Round>
          <Round cls="left-[972px] top-[171px]">
            <HandIc />
          </Round>
          <Round cls="left-[972px] top-[202px]">
            <svg width="20" height="20" viewBox="0 0 20 20" fill="none" stroke="#e4e4e4" strokeWidth="1.200">
              <path d="M3 9Q1 3 7 3h4l3-1q4 0 4 4 0 3-4 3z" />
              <circle cx="13" cy="6" r="1.500" />
              <path d="M5 6h3M5 12h9v5H5zM3 12h2M16 14l3-2v5l-3-2" />
            </svg>
          </Round>
          <Round cls="left-[972px] top-[232px]">
            <svg width="20" height="20" viewBox="0 0 20 20" fill="none" stroke="#e4e4e4" strokeWidth="1.200">
              <path d="M5 3h10l3 14H2zM4 8h12M3 12.500h14M8 3l-1.500 14M12 3l1.500 14" />
            </svg>
          </Round>
        </div>
      </div>
    </div>
  );
}
